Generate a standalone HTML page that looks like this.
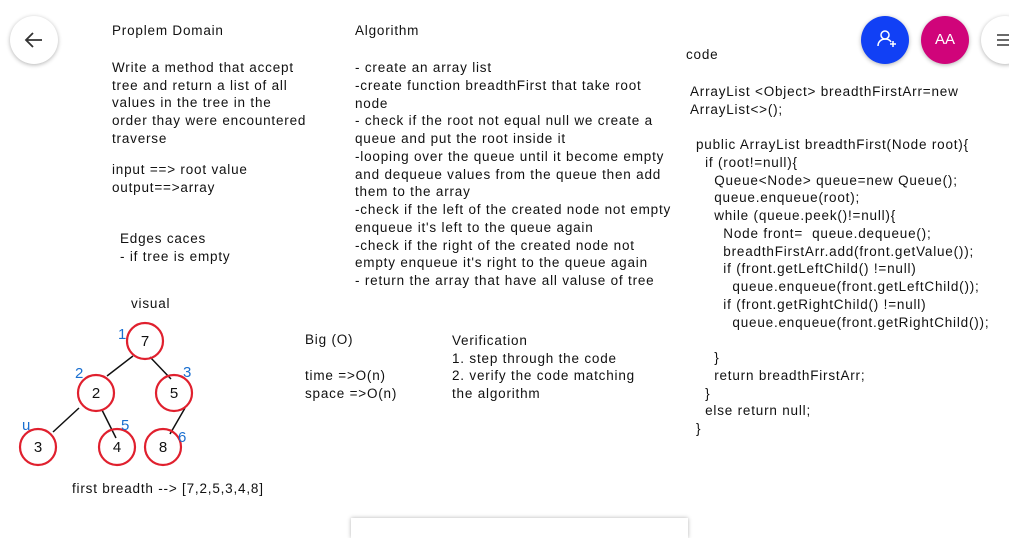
<!DOCTYPE html><html><head><style>
body{margin:0;width:1009px;height:533px;background:#fff;overflow:hidden;position:relative;font-family:"Liberation Sans",sans-serif;color:#111}
.t{position:absolute;font-size:13.5px;letter-spacing:0.8px;white-space:nowrap;line-height:16px}
.btn{position:absolute;border-radius:50%;width:48px;height:48px;box-shadow:0 1px 4px rgba(0,0,0,.3)}
</style></head><body>
<div class="btn" style="left:10px;top:16px;background:#fff"><svg width="48" height="48"><path d="M32 24H16M23 17l-7 7 7 7" stroke="#333" stroke-width="1.8" fill="none"/></svg></div>
<div class="btn" style="left:861px;top:16px;background:#1140f5"><svg width="48" height="48"><circle cx="24" cy="19" r="4" stroke="#fff" fill="none" stroke-width="1.5"/><path d="M17 30c0-5 4-7 7-7s5 1 6 3M29 28h6M32 25v6" stroke="#fff" fill="none" stroke-width="1.5"/></svg></div>
<div class="btn" style="left:921px;top:16px;background:#d0047a;color:#fff;font-size:15px;text-align:center;line-height:48px">AA</div>
<div class="btn" style="left:981px;top:16px;background:#fff"><svg width="48" height="48"><path d="M16 19h14M16 24h14M16 29h14" stroke="#555" stroke-width="1.8"/></svg></div>
<div style="position:absolute;left:351px;top:518px;width:337px;height:20px;background:#fff;box-shadow:0 0 4px rgba(0,0,0,.3)"></div>

<div class="t" style="left:112px;top:23px">Proplem Domain</div>
<div class="t" style="left:112px;top:59px;line-height:17.7px">Write a method that accept<br>tree and return a list of all<br>values in the tree in the<br>order thay were encountered<br>traverse</div>
<div class="t" style="left:112px;top:161px;line-height:17.7px">input ==&gt; root value<br>output==&gt;array</div>
<div class="t" style="left:120px;top:230px;line-height:17.7px">Edges caces<br>- if tree is empty</div>
<div class="t" style="left:131px;top:296px">visual</div>

<div class="t" style="left:355px;top:23px">Algorithm</div>
<div class="t" style="left:355px;top:59px;line-height:17.77px">- create an array list<br>-create function breadthFirst that take root<br>node<br>- check if the root not equal null we create a<br>queue and put the root inside it<br>-looping over the queue until it become empty<br>and dequeue values from the queue then add<br>them to the array<br>-check if the left of the created node not empty<br>enqueue it's left to the queue again<br>-check if the right of the created node not<br>empty enqueue it's right to the queue again<br>- return the array that have all valuse of tree</div>

<div class="t" style="left:686px;top:47px">code</div>
<div class="t" style="left:690px;top:83px;line-height:17.7px">ArrayList &lt;Object&gt; breadthFirstArr=new<br>ArrayList&lt;&gt;();</div>
<div class="t" style="left:696px;top:136px;line-height:17.75px;white-space:pre">public ArrayList breadthFirst(Node root){
  if (root!=null){
    Queue&lt;Node&gt; queue=new Queue();
    queue.enqueue(root);
    while (queue.peek()!=null){
      Node front=  queue.dequeue();
      breadthFirstArr.add(front.getValue());
      if (front.getLeftChild() !=null)
        queue.enqueue(front.getLeftChild());
      if (front.getRightChild() !=null)
        queue.enqueue(front.getRightChild());

    }
    return breadthFirstArr;
  }
  else return null;
}</div>

<div class="t" style="left:305px;top:332px">Big (O)</div>
<div class="t" style="left:305px;top:367px;line-height:17.7px">time =&gt;O(n)<br>space =&gt;O(n)</div>
<div class="t" style="left:452px;top:332px;line-height:17.7px">Verification<br>1. step through the code<br>2. verify the code matching<br>the algorithm</div>
<div class="t" style="left:72px;top:481px">first breadth --&gt; [7,2,5,3,4,8]</div>

<svg style="position:absolute;left:0;top:0" width="300" height="533">
<g stroke="#111" stroke-width="1.5" fill="none">
<path d="M133 356L107 376M150 357L171 379M79 408L53 432M102 410L116 438M185 408L170 434"/>
</g>
<g stroke="#e0202e" stroke-width="2.2" fill="none">
<circle cx="145" cy="341" r="18"/><circle cx="96" cy="393" r="18"/><circle cx="174" cy="393" r="18"/>
<circle cx="38" cy="447" r="18"/><circle cx="117" cy="447" r="18"/><circle cx="163" cy="447" r="18"/>
</g>
<g font-family="Liberation Sans" font-size="15" text-anchor="middle" fill="#111">
<text x="145" y="346">7</text><text x="96" y="398">2</text><text x="174" y="398">5</text>
<text x="38" y="452">3</text><text x="117" y="452">4</text><text x="163" y="452">8</text>
</g>
<g font-family="Liberation Sans" font-size="15" fill="#1a6fd0">
<text x="118" y="339">1</text><text x="75" y="378">2</text><text x="183" y="377">3</text>
<text x="22" y="430">u</text><text x="121" y="430">5</text><text x="178" y="442">6</text>
</g>
</svg>
</body></html>
